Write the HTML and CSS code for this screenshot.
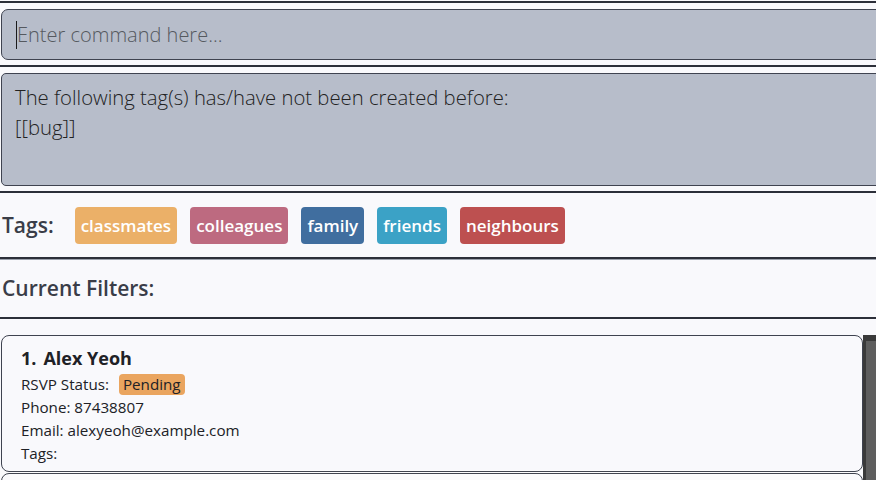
FILE: index.html
```html
<!DOCTYPE html>
<html>
<head>
<meta charset="utf-8">
<link rel="stylesheet" href="styles.css">
</head>
<body>
<div class="app">
  <section class="pane cmd-pane">
    <div class="cmd-box"><span class="caret"></span><span class="placeholder">Enter command here...</span></div>
  </section>
  <section class="pane result-pane">
    <div class="result-box">The following tag(s) has/have not been created before:<br>[[bug]]</div>
  </section>
  <section class="pane tags-pane">
    <span class="label">Tags:</span>
    <span class="tag t-classmates">classmates</span>
    <span class="tag t-colleagues">colleagues</span>
    <span class="tag t-family">family</span>
    <span class="tag t-friends">friends</span>
    <span class="tag t-neighbours">neighbours</span>
  </section>
  <section class="pane filters-pane">
    <span class="label">Current Filters:</span>
  </section>
  <section class="list-pane">
    <div class="list">
      <div class="card">
        <div class="name"><span class="index">1.</span>Alex Yeoh</div>
        <div class="row">RSVP Status: <span class="rsvp">Pending</span></div>
        <div class="row">Phone: 87438807</div>
        <div class="row">Email: alexyeoh@example.com</div>
        <div class="row">Tags:</div>
      </div>
      <div class="card"></div>
    </div>
    <div class="scrollbar"><div class="thumb"></div></div>
  </section>
</div>
</body>
</html>
```

FILE: styles.css
```css
html, body {
  margin: 0;
  padding: 0;
  background: #f9f9fc;
  overflow: hidden;
}
body {
  font-family: "Open Sans", "Noto Sans", sans-serif;
  color: #1e1f24;
}
.app {
  display: flex;
  flex-direction: column;
  padding-top: 1px;
  height: 479px;
}
.pane {
  border-top: 2px solid #2c2f39;
}
.cmd-pane {
  padding: 6px 0 5px 1px;
}
.cmd-box {
  height: 49px;
  margin-right: -12px;
  background: #b7bdca;
  border: 1px solid #3f4350;
  border-radius: 7px;
  display: flex;
  align-items: center;
  padding-left: 14px;
  box-sizing: content-box;
}
.caret {
  width: 1px;
  height: 28px;
  background: #1b1b1b;
  margin-right: 0;
}
.placeholder {
  font-size: 20px;
  font-weight: 300;
  color: #55595f;
}
.result-pane {
  padding: 6px 0 5px 1px;
}
.result-box {
  height: 103px;
  margin-right: -12px;
  background: #b7bdca;
  border: 1px solid #3f4350;
  border-radius: 5px;
  padding: 8px 0 0 13px;
  font-size: 20.3px;
  font-weight: 300;
  line-height: 30px;
  color: #222;
  box-sizing: content-box;
}
.tags-pane {
  height: 64px;
  display: flex;
  align-items: center;
  padding-left: 2px;
}
.label {
  font-size: 21px;
  font-weight: 600;
  color: #3a3d48;
}
.tags-pane .label {
  margin-right: 21px;
}
.tag {
  color: #fff;
  font-size: 17px;
  font-weight: 600;
  height: 37px;
  line-height: 37px;
  padding: 0 6px;
  border-radius: 4px;
  margin-right: 13px;
}
.t-classmates { background: #ebb068; }
.t-colleagues { background: #bd6a80; }
.t-family { background: #406e9f; }
.t-friends { background: #3ba2c6; }
.t-neighbours { background: #bd5050; }
.filters-pane {
  height: 58px;
  display: flex;
  align-items: center;
  padding-left: 2px;
  border-top: 2px solid #2c2f39;
  box-shadow: inset 0 1px 0 #9aa0ab;
}
.list-pane {
  border-top: 2px solid #2c2f39;
  flex: 1;
  display: flex;
  padding-top: 16px;
  overflow: hidden;
}
.list {
  flex: 1;
  padding-left: 1px;
}
.card {
  border: 1px solid #3f4350;
  border-radius: 8px;
  height: 137px;
  margin-bottom: 1px;
  padding: 9px 0 0 19px;
  box-sizing: border-box;
  font-size: 15.2px;
  color: #202126;
}
.name {
  font-size: 18px;
  font-weight: 700;
  line-height: 26px;
  margin-bottom: 2px;
}
.index {
  margin-right: 7px;
}
.row {
  line-height: 23px;
}
.rsvp {
  display: inline-block;
  background: #eaa55f;
  border-radius: 4px;
  padding: 0 4px;
  line-height: 21px;
  margin-left: 6px;
}
.scrollbar {
  width: 13px;
  background: #3a3a3a;
  padding: 6px 0 0 3px;
  box-sizing: border-box;
}
.thumb {
  background: #5e5e5e;
  height: 200px;
  width: 10px;
}
```
